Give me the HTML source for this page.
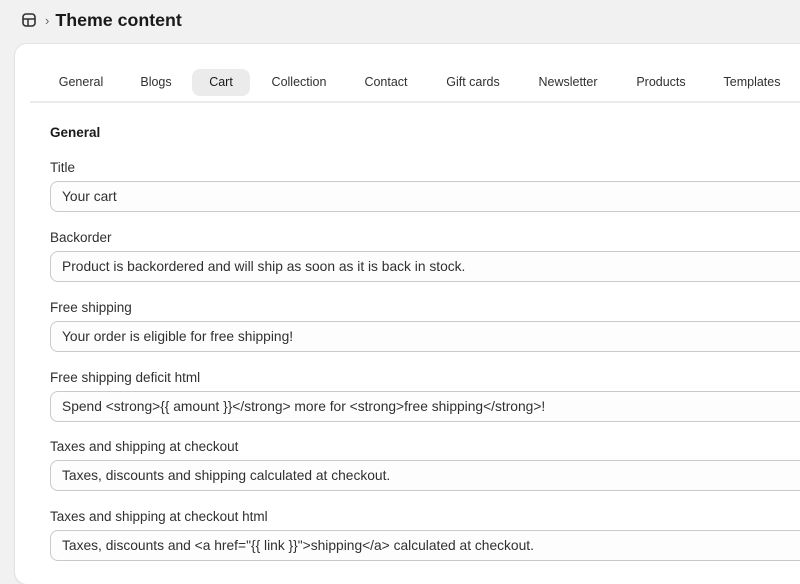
<!DOCTYPE html>
<html><head><meta charset="utf-8"><style>
*{box-sizing:border-box;margin:0;padding:0}
body{width:800px;height:568px;overflow:hidden;background:#f1f1f1;font-family:"Liberation Sans",sans-serif;color:#303030;position:relative}
.hdr{position:absolute;left:22px;top:9px;height:22px;display:flex;align-items:center}
.hdr .t{font-size:17.8px;font-weight:bold;color:#1a1a1a;margin-left:6px}
.chev{font-size:13px;color:#666;margin-left:9px}
.card{position:absolute;left:15px;top:44px;width:800px;height:540px;background:#fff;border-radius:12px;box-shadow:0 0 0 1px #e3e3e3,0 1px 2px rgba(0,0,0,.1)}
.tabs{position:absolute;left:15px;top:25px;right:0;height:34px;border-bottom:2px solid #ebebeb}
.tab{position:absolute;top:0;height:27px;line-height:27px;font-size:12.5px;color:#303030;transform:translateX(-50%);white-space:nowrap}
.tab.sel{background:#ebebeb;border-radius:8px;width:58px;text-align:center;color:#1a1a1a}
.sec{position:absolute;left:35px;top:81px;font-size:13.5px;font-weight:bold;color:#1a1a1a}
.lbl{position:absolute;left:35px;font-size:13.5px;color:#303030}
.inp{position:absolute;left:35px;width:800px;height:31px;border:1px solid #c9c9c9;border-radius:8px;background:#fdfdfd;font-size:13.8px;line-height:29px;padding-left:11px;color:#303030;white-space:nowrap}
</style></head><body>
<div class="hdr"><svg width="14" height="14" viewBox="0 0 14 14"><rect x="1" y="1" width="12" height="12" rx="3" fill="none" stroke="#303030" stroke-width="1.6"/><line x1="1" y1="6" x2="13" y2="6" stroke="#303030" stroke-width="1.5"/><line x1="6" y1="6" x2="6" y2="13" stroke="#303030" stroke-width="1.5"/></svg><span class="chev">›</span><span class="t">Theme content</span></div>
<div class="card">
<div class="tabs">
<div class="tab" style="left:51px">General</div>
<div class="tab" style="left:126px">Blogs</div>
<div class="tab sel" style="left:191px">Cart</div>
<div class="tab" style="left:269px">Collection</div>
<div class="tab" style="left:356px">Contact</div>
<div class="tab" style="left:443px">Gift cards</div>
<div class="tab" style="left:538px">Newsletter</div>
<div class="tab" style="left:631px">Products</div>
<div class="tab" style="left:722px">Templates</div>
</div>
<div class="sec">General</div>
<div class="lbl" style="top:116px">Title</div>
<div class="inp" style="top:137px">Your cart</div>
<div class="lbl" style="top:186px">Backorder</div>
<div class="inp" style="top:207px">Product is backordered and will ship as soon as it is back in stock.</div>
<div class="lbl" style="top:256px">Free shipping</div>
<div class="inp" style="top:277px">Your order is eligible for free shipping!</div>
<div class="lbl" style="top:326px">Free shipping deficit html</div>
<div class="inp" style="top:347px">Spend &lt;strong&gt;{{ amount }}&lt;/strong&gt; more for &lt;strong&gt;free shipping&lt;/strong&gt;!</div>
<div class="lbl" style="top:395px">Taxes and shipping at checkout</div>
<div class="inp" style="top:416px">Taxes, discounts and shipping calculated at checkout.</div>
<div class="lbl" style="top:465px">Taxes and shipping at checkout html</div>
<div class="inp" style="top:486px">Taxes, discounts and &lt;a href="{{ link }}"&gt;shipping&lt;/a&gt; calculated at checkout.</div>
</div>
</body></html>
